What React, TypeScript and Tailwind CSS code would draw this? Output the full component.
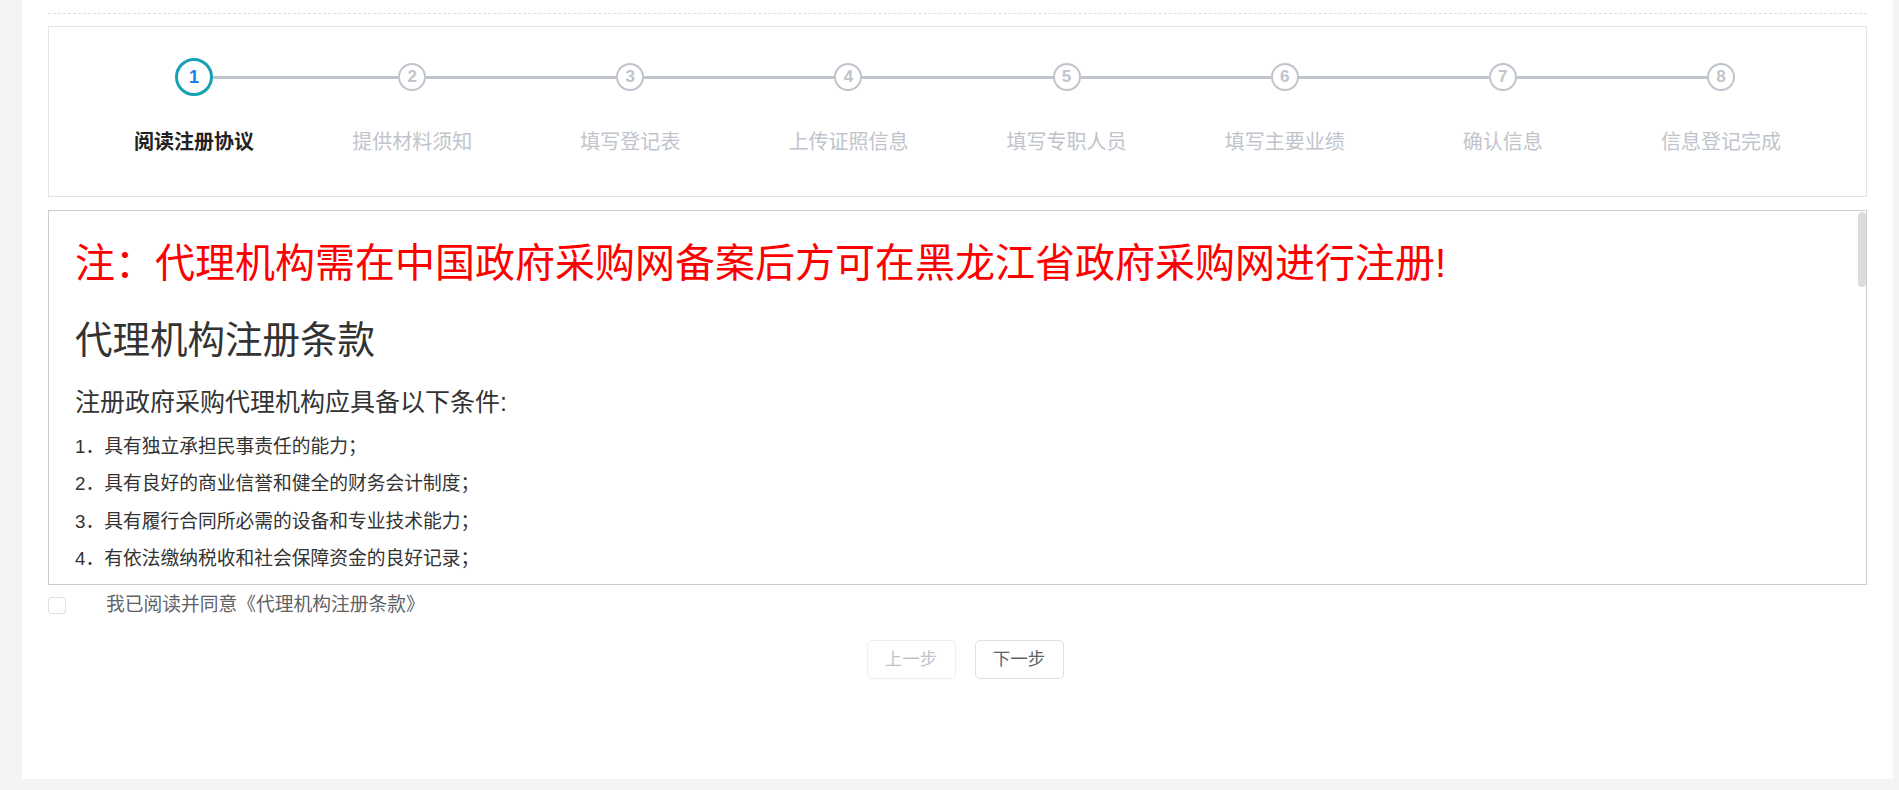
const steps = [
  '阅读注册协议',
  '提供材料须知',
  '填写登记表',
  '上传证照信息',
  '填写专职人员',
  '填写主要业绩',
  '确认信息',
  '信息登记完成',
];

const conditions = [
  '具有独立承担民事责任的能力；',
  '具有良好的商业信誉和健全的财务会计制度；',
  '具有履行合同所必需的设备和专业技术能力；',
  '有依法缴纳税收和社会保障资金的良好记录；',
  '参加政府采购活动前三年内，在经营活动中没有重大违法记录；',
  '法律、行政法规规定的其他条件。',
];

const rules = [
  '代理机构应当如实填写登记信息，并对所提交材料的真实性、合法性负责；',
  '代理机构登记信息发生变更的，应当在变更之日起十个工作日内办理变更手续；',
  '代理机构应当遵守政府采购法律法规，依法开展政府采购代理业务；',
  '代理机构不得以不正当手段获取政府采购代理业务，不得与采购人、供应商恶意串通；',
  '代理机构应当建立完善的内部监督管理制度，妥善保存政府采购项目档案；',
  '代理机构应当接受财政部门的监督检查，如实反映情况，提供有关材料；',
  '代理机构专职人员应当具备相应的专业知识，定期参加政府采购业务培训；',
  '对违反上述规定的代理机构，财政部门将依法依规予以处理。',
];

export default function App() {
  return (
    <div className="h-[790px] bg-[#f4f4f4] font-['Liberation_Sans','Noto_Sans_CJK_SC',sans-serif]">
      <div className="ml-[22px] w-[1871px] h-[779px] bg-white px-[26px] pt-[13px]">
        <div className="border-t border-dashed border-[#dedede]" />

        {/* steps */}
        <div className="mt-[12px] border border-[#e4e4e4] px-[36px] pt-[31px] pb-[40px]">
          <div className="grid grid-cols-8">
            {steps.map((s, i) => (
              <div key={s} className="flex flex-col items-center">
                <div className="flex items-center w-full h-[38px]">
                  <div className={i === 0 ? 'flex-1 h-[3px]' : 'flex-1 h-[3px] bg-[#c0c4cc]'} />
                  {i === 0 ? (
                    <div className="w-[38px] h-[38px] shrink-0 rounded-full border-[3px] border-[#18a0b4] flex items-center justify-center text-[18px] font-bold text-[#1d7fe3]">
                      {i + 1}
                    </div>
                  ) : (
                    <div className="w-[28px] h-[28px] shrink-0 rounded-full border-2 border-[#c0c4cc] flex items-center justify-center text-[17px] font-bold text-[#c0c4cc]">
                      {i + 1}
                    </div>
                  )}
                  <div className={i === steps.length - 1 ? 'flex-1 h-[3px]' : 'flex-1 h-[3px] bg-[#c0c4cc]'} />
                </div>
                <div
                  className={
                    i === 0
                      ? 'mt-[32px] text-[20px] leading-[28px] font-bold text-[#222]'
                      : 'mt-[32px] text-[20px] leading-[28px] text-[#c0c4cc]'
                  }
                >
                  {s}
                </div>
              </div>
            ))}
          </div>
        </div>

        {/* agreement text */}
        <div className="relative mt-[13px]">
          <div className="h-[375px] border border-[#cccccc] overflow-y-auto [scrollbar-width:none] pl-[26px] pr-[20px] pt-[22px] pb-[30px] text-[#333]">
            <p className="text-[40px] leading-[60px] text-[#ff0000]">
              注：代理机构需在中国政府采购网备案后方可在黑龙江省政府采购网进行注册!
            </p>
            <h2 className="mt-[19px] text-[37.5px] leading-[56px]">代理机构注册条款</h2>
            <h3 className="mt-[16px] text-[25px] leading-[37.5px]">注册政府采购代理机构应具备以下条件:</h3>
            <ul className="mt-[6px] text-[18.75px] leading-[37.5px]">
              {conditions.map((c, i) => (
                <li key={c}>
                  {i + 1}．{c}
                </li>
              ))}
            </ul>
            <h3 className="mt-[16px] text-[25px] leading-[37.5px]">代理机构注册须知:</h3>
            <ul className="mt-[6px] text-[18.75px] leading-[37.5px]">
              {rules.map((c, i) => (
                <li key={c}>
                  {i + 1}．{c}
                </li>
              ))}
            </ul>
            <h3 className="mt-[16px] text-[25px] leading-[37.5px]">其他说明:</h3>
            <ul className="mt-[6px] text-[18.75px] leading-[37.5px]">
              <li>1．本条款由黑龙江省财政厅负责解释；</li>
              <li>2．本条款自发布之日起施行；</li>
              <li>3．代理机构点击“我已阅读并同意”即视为接受本条款全部内容。</li>
            </ul>
          </div>
          {/* scrollbar thumb */}
          <div className="absolute right-[1px] top-[2px] w-[8px] h-[75px] rounded-[4px] bg-[#dcdcdc]" />
        </div>

        {/* agree */}
        <label className="mt-[8px] flex items-center gap-[40px]">
          <span className="w-[18px] h-[17px] shrink-0 rounded-[3px] border border-[#dcdfe6] bg-white" />
          <span className="text-[18.75px] leading-[24px] text-[#606266]">我已阅读并同意《代理机构注册条款》</span>
        </label>

        {/* buttons */}
        <div className="mt-[23px] flex justify-center gap-[19px] pl-[15px]">
          <button
            disabled
            className="w-[89px] h-[39px] rounded-[5px] border border-[#ebeef5] bg-white text-[17.5px] text-[#c0c4cc]"
          >
            上一步
          </button>
          <button className="w-[89px] h-[39px] rounded-[5px] border border-[#dcdfe6] bg-white text-[17.5px] text-[#606266]">
            下一步
          </button>
        </div>
      </div>
    </div>
  );
}
